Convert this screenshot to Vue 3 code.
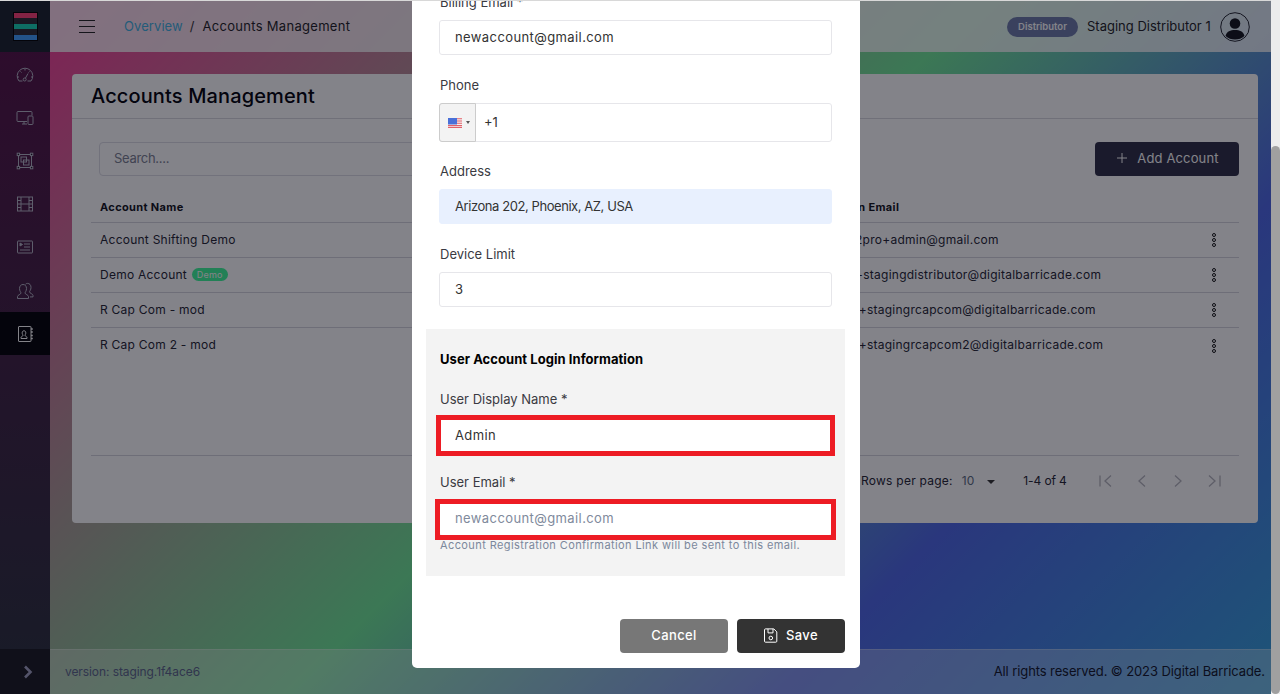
<script setup>
const navIcons = ['gauge', 'devices', 'group', 'film', 'list', 'people', 'book']

const accounts = [
  { name: 'Account Shifting Demo', email: 'demo2pro+admin@gmail.com' },
  { name: 'Demo Account', demo: true, email: 'demo+stagingdistributor@digitalbarricade.com' },
  { name: 'R Cap Com - mod', email: 'demo.+stagingrcapcom@digitalbarricade.com' },
  { name: 'R Cap Com 2 - mod', email: 'demo.+stagingrcapcom2@digitalbarricade.com' }
]
</script>

<template>
  <div class="shell">
    <div class="page">
      <aside class="sidebar">
        <div class="logo-cell">
          <div class="logo">
            <span class="bar red"></span>
            <span class="bar green"></span>
            <span class="bar blue"></span>
          </div>
        </div>
        <nav class="nav">
          <a v-for="icon in navIcons" :key="icon" class="nav-item" :class="{ active: icon === 'book' }">
            <svg width="18" height="18" viewBox="0 0 18 18" fill="none" stroke="currentColor" stroke-width="1">
              <template v-if="icon === 'gauge'">
                <path d="M3 15a7.800 7.800 0 1 1 12 0h-3.500" />
                <path d="M3 15h3.500" />
                <path d="M9 3v1.500M4.500 5.500l1 1M13.500 5.500l-1 1M1.500 11H3M15 11h1.500" />
                <path d="M9.500 12l2.500-4.500" />
                <circle cx="8.700" cy="13.500" r="1.500" />
              </template>
              <template v-else-if="icon === 'devices'">
                <path d="M11 12.500H2a1 1 0 0 1-1-1v-8a1 1 0 0 1 1-1h13a1 1 0 0 1 1 1v3" />
                <path d="M6 15h5M8 12.500V15" />
                <rect x="12" y="7" width="5" height="8.500" rx="1" />
              </template>
              <template v-else-if="icon === 'group'">
                <rect x="2.500" y="2.500" width="13" height="13" />
                <rect x="1.200" y="1.200" width="2.400" height="2.400" fill="#1c0c20" />
                <rect x="14.400" y="1.200" width="2.400" height="2.400" fill="#1c0c20" />
                <rect x="1.200" y="14.400" width="2.400" height="2.400" fill="#1c0c20" />
                <rect x="14.400" y="14.400" width="2.400" height="2.400" fill="#1c0c20" />
                <rect x="5" y="5" width="5.500" height="5" />
                <rect x="7.500" y="8" width="5.500" height="5" />
              </template>
              <template v-else-if="icon === 'film'">
                <rect x="1.500" y="2" width="15" height="14" />
                <path d="M5 2v14M13 2v14M5 9h8M1.500 5.500H5M1.500 9H5M1.500 12.500H5M13 5.500h3.500M13 9h3.500M13 12.500h3.500" />
              </template>
              <template v-else-if="icon === 'list'">
                <rect x="1.500" y="3" width="15" height="12" rx="0.500" />
                <path d="M8 6h6M8 9h6M4 12h10" />
                <path d="M4 5l2.500 1.500L4 8z" fill="currentColor" />
              </template>
              <template v-else-if="icon === 'people'">
                <path d="M1.500 16.500v-2c0-1.500 3.500-2.200 3.500-3.500 0-.8-1.500-1.800-1.500-4.500C3.500 4 5 2.500 7 2.500S10.500 4 10.500 6.500c0 2.700-1.500 3.700-1.500 4.500 0 1.300 3.500 2 3.500 3.500v2z" />
                <path d="M9.500 2.300c.5-.6 1.200-.9 2-.9 2 0 3.500 1.500 3.500 4 0 2.700-1.500 3.700-1.500 4.500 0 1.300 3.500 2 3.500 3.500v1.500h-3" />
              </template>
              <template v-else>
                <rect x="2.500" y="1.500" width="12.500" height="15" rx="0.500" />
                <path d="M15 4h1.800M15 7h1.800M15 10.500h1.800M15 13.500h1.800" stroke-width="1.400" />
                <path d="M5 13.500v-1c0-1 2-1.200 2-2.200 0-.5-.8-1-.8-2.500 0-1.300.7-2 1.800-2s1.800.7 1.800 2c0 1.500-.8 2-.8 2.500 0 1 2 1.200 2 2.200v1z" />
              </template>
            </svg>
          </a>
        </nav>
        <div class="expand">
          <svg width="12" height="14" viewBox="0 0 12 14" fill="none" stroke="currentColor" stroke-width="2.600">
            <path d="M3 1.500L8.500 7 3 12.500" />
          </svg>
        </div>
      </aside>

      <div class="main">
        <header class="topbar">
          <button class="burger">
            <span></span><span></span><span></span>
          </button>
          <div class="crumbs">
            <a class="crumb-link">Overview</a>
            <span class="crumb-sep">/</span>
            <span class="crumb-current">Accounts Management</span>
          </div>
          <div class="user">
            <span class="role">Distributor</span>
            <span class="user-name">Staging Distributor 1</span>
            <span class="avatar">
              <svg width="30" height="30" viewBox="0 0 30 30">
                <circle cx="15" cy="15" r="14.300" fill="none" stroke="#20222c" stroke-width="1" />
                <circle cx="15" cy="11.500" r="5.300" fill="#10121a" />
                <path d="M5.500 24c1-4.500 5-6 9.500-6s8.500 1.500 9.500 6c-2.500 2.500-6 3.500-9.500 3.500s-7-1-9.500-3.500z" fill="#10121a" />
              </svg>
            </span>
          </div>
        </header>

        <main class="content">
          <section class="card">
            <h1 class="card-title">Accounts Management</h1>
            <div class="card-body">
              <div class="toolbar">
                <input class="search" placeholder="Search...." />
                <button class="add-btn">
                  <svg width="10" height="10" viewBox="0 0 10 10" stroke="currentColor" stroke-width="1">
                    <path d="M5 0v10M0 5h10" />
                  </svg>
                  Add Account
                </button>
              </div>
              <table class="table">
                <thead>
                  <tr>
                    <th>Account Name</th>
                    <th class="email-col email-head">Login Email</th>
                    <th class="menu-col"></th>
                  </tr>
                </thead>
                <tbody>
                  <tr v-for="row in accounts" :key="row.name">
                    <td>
                      {{ row.name }}
                      <span v-if="row.demo" class="demo-pill">Demo</span>
                    </td>
                    <td class="email-col">{{ row.email }}</td>
                    <td class="menu-col">
                      <span class="dots"><i></i><i></i><i></i></span>
                    </td>
                  </tr>
                </tbody>
              </table>
              <div class="pager">
                <span>Rows per page:</span>
                <span class="per-page">10</span>
                <span class="caret"></span>
                <span class="range">1-4 of 4</span>
                <div class="pager-btns">
                  <svg width="16" height="16" viewBox="0 0 16 16" fill="none" stroke="currentColor" stroke-width="1.300">
                    <path d="M2 2.500v11M13 2.500L7 8l6 5.500" />
                  </svg>
                  <svg width="16" height="16" viewBox="0 0 16 16" fill="none" stroke="currentColor" stroke-width="1.300">
                    <path d="M11 2.500L5 8l6 5.500" />
                  </svg>
                  <svg width="16" height="16" viewBox="0 0 16 16" fill="none" stroke="currentColor" stroke-width="1.300">
                    <path d="M5 2.500L11 8l-6 5.500" />
                  </svg>
                  <svg width="16" height="16" viewBox="0 0 16 16" fill="none" stroke="currentColor" stroke-width="1.300">
                    <path d="M3 2.500L9 8l-6 5.500M14 2.500v11" />
                  </svg>
                </div>
              </div>
            </div>
          </section>
        </main>

        <footer class="footer">
          <span class="version">version: staging.1f4ace6</span>
          <span class="rights">All rights reserved. © 2023 Digital Barricade.</span>
        </footer>
      </div>

      <div class="backdrop"></div>

      <div class="modal">
        <div class="field">
          <label>Billing Email *</label>
          <input class="input" value="newaccount@gmail.com" />
        </div>
        <div class="field phone-field">
          <label>Phone</label>
          <div class="phone">
            <span class="flag-box">
              <svg width="14" height="10" viewBox="0 0 14 10">
                <rect width="14" height="10" fill="#f4f0f0" />
                <path d="M0 .7h14M0 3h14M0 5.300h14M0 7.600h14M0 9.500h14" stroke="#e2606a" stroke-width="1.100" />
                <rect width="9" height="6.500" fill="#4a70d8" />
              </svg>
              <span class="flag-caret"></span>
            </span>
            <span class="phone-value">+1</span>
          </div>
        </div>
        <div class="field">
          <label>Address</label>
          <input class="input filled" value="Arizona 202, Phoenix, AZ, USA" />
        </div>
        <div class="field device">
          <label>Device Limit</label>
          <input class="input" value="3" />
        </div>

        <div class="login-box">
          <h3>User Account Login Information</h3>
          <div class="field">
            <label>User Display Name *</label>
            <div class="marked">
              <input class="input" value="Admin" />
              <span class="mark mark-name"></span>
            </div>
          </div>
          <div class="field last">
            <label>User Email *</label>
            <div class="marked">
              <input class="input" placeholder="newaccount@gmail.com" />
              <span class="mark mark-email"></span>
            </div>
            <small>Account Registration Confirmation Link will be sent to this email.</small>
          </div>
        </div>

        <div class="modal-actions">
          <button class="btn cancel">Cancel</button>
          <button class="btn save">
            <svg width="14" height="15" viewBox="0 0 14 15" fill="none" stroke="currentColor" stroke-width="1">
              <path d="M1.500.9h8.300l3 3v9.300a1 1 0 0 1-1 1H1.500a1 1 0 0 1-1-1V1.900a1 1 0 0 1 1-1z" />
              <path d="M4 .9v4h5v-4" />
              <circle cx="6.800" cy="10" r="1.800" />
            </svg>
            Save
          </button>
        </div>
      </div>
    </div>
    <div class="scrollbar"><span class="thumb"></span></div>
  </div>
</template>

<style>
html, body {
  margin: 0;
  height: 100%;
  overflow: hidden;
}
</style>

<style scoped>
* {
  box-sizing: border-box;
}

.shell {
  display: flex;
  height: 100vh;
  font-family: Inter, "Liberation Sans", sans-serif;
  font-size: 13px;
  color: #333;
  background: #d8d8d8;
  padding-top: 1px;
}

.page {
  position: relative;
  flex: 1;
  display: flex;
  min-width: 0;
  overflow: hidden;
  background: linear-gradient(135deg, #ff3296 0%, #70e896 50%, #4c66e6 75%, #34a2dc 100%);
}

.scrollbar {
  width: 9px;
  margin-top: -1px;
  background: #ececec;
  display: flex;
  padding-top: 146px;
}

.thumb {
  flex: 1;
  background: #a0a0a0;
  border-radius: 5px;
}

.sidebar {
  width: 50px;
  flex: none;
  display: flex;
  flex-direction: column;
  background: linear-gradient(180deg, #560f46 0%, #28303c 100%);
  color: #b4b4c4;
}

.logo-cell {
  height: 51px;
  flex: none;
  background: #18202a;
  padding: 11px 0 0 13px;
}

.logo {
  width: 25px;
  height: 29px;
  background: #2a2a34;
  border: 1px solid #000;
  display: flex;
  flex-direction: column;
  justify-content: space-between;
}

.bar {
  height: 5px;
}

.bar.red { background: #ff3e74; }
.bar.green { background: #14d4b4; }
.bar.blue { background: #3e9eff; }

.nav {
  flex: 1;
  padding-top: 1px;
}

.nav-item {
  height: 43.2px;
  display: flex;
  align-items: center;
  justify-content: center;
}

.nav-item.active {
  background: #000004;
  color: #fff;
}

.expand {
  height: 45px;
  flex: none;
  background: #181820;
  color: #a0a0c0;
  display: flex;
  align-items: center;
  justify-content: center;
  padding-left: 6px;
}

.main {
  flex: 1;
  min-width: 0;
  display: flex;
  flex-direction: column;
}

.topbar {
  height: 51px;
  flex: none;
  display: flex;
  align-items: center;
  padding-left: 29px;
  padding-right: 21px;
  background: rgba(255, 255, 255, 0.8);
  color: #1c1c24;
}

.burger {
  width: 16px;
  height: 13px;
  padding: 0;
  border: 0;
  background: none;
  display: flex;
  flex-direction: column;
  justify-content: space-between;
  margin-right: 29px;
}

.burger span {
  height: 1px;
  background: #222;
}

.crumbs {
  display: flex;
  align-items: center;
  margin-bottom: 2px;
}

.crumb-link {
  color: #3fb0e0;
  letter-spacing: 0.08px;
}

.crumb-sep {
  margin: 0 8px 0 7px;
  color: #333;
}

.crumb-current {
  letter-spacing: 0.3px;
}

.user {
  margin-left: auto;
  display: flex;
  align-items: center;
}

.role {
  width: 71px;
  height: 20px;
  margin-right: 9px;
  border-radius: 10px;
  background: #6c7aa8;
  color: #fff;
  font-size: 9.500px;
  font-weight: 600;
  line-height: 20px;
  text-align: center;
}

.user-name {
  width: 133px;
  white-space: nowrap;
  margin-bottom: 2px;
}

.avatar {
  height: 30px;
}

.content {
  flex: 1;
  padding: 22px 13px 0 22px;
}

.card {
  height: 449px;
  background: #fff;
  border-radius: 4px;
  display: flex;
  flex-direction: column;
}

.card-title {
  margin: 0;
  height: 45px;
  flex: none;
  padding-left: 19px;
  border-bottom: 1px solid #d8d8de;
  font-size: 20px;
  font-weight: 500;
  line-height: 44px;
  letter-spacing: 0.13px;
  color: #000008;
}

.card-body {
  padding: 23px 19px 0;
}

.toolbar {
  display: flex;
  justify-content: space-between;
  padding-left: 8px;
}

.search {
  width: 420px;
  height: 34px;
  padding: 0 14px 2px;
  border: 1px solid #dcdce4;
  border-radius: 4px;
  font: inherit;
  letter-spacing: -0.3px;
  outline: none;
  background: #fff;
}

.search::placeholder {
  color: #7a8090;
}

.add-btn {
  width: 144px;
  height: 34px;
  padding: 0 0 2px 2px;
  border: 0;
  border-radius: 4px;
  background: #2c2c44;
  color: #fff;
  font: inherit;
  letter-spacing: 0.14px;
  display: flex;
  align-items: center;
  justify-content: center;
  gap: 10px;
}

.table {
  width: 100%;
  margin-top: 11px;
  border-collapse: collapse;
  font-size: 12px;
  letter-spacing: 0.25px;
}

.table tr {
  height: 35px;
}

.table th {
  height: 35px;
  padding: 6px 0 0 9px;
  text-align: left;
  font-size: 11px;
  font-weight: 700;
  letter-spacing: 0.35px;
  color: #101018;
  border-bottom: 1px solid #d4d4dc;
}

.table td {
  padding: 0 0 0 9px;
  color: #222230;
  border-bottom: 1px solid #d4d4dc;
}

.table tbody tr:last-child td {
  border-bottom: 0;
}

.table .email-col {
  width: 367px;
  padding-left: 0;
  white-space: nowrap;
}

.table .email-head {
  padding-left: 12px;
}

.table .menu-col {
  width: 50px;
  padding-left: 0;
  text-align: center;
}

.demo-pill {
  display: inline-block;
  height: 13px;
  padding: 0 5px;
  margin-left: 1px;
  border-radius: 7px;
  background: #3cf898;
  color: #fff;
  font-size: 9px;
  line-height: 13px;
  vertical-align: 1px;
}

.dots {
  display: inline-flex;
  flex-direction: column;
  gap: 1px;
  vertical-align: middle;
}

.dots i {
  width: 4px;
  height: 4px;
  border: 1px solid #111;
  border-radius: 50%;
}

.pager {
  height: 50px;
  margin-top: 93px;
  border-top: 1px solid #d4d4dc;
  display: flex;
  align-items: center;
  padding-left: 770px;
  font-size: 12px;
  color: #222230;
  letter-spacing: 0.25px;
}

.per-page {
  margin-left: 9px;
  letter-spacing: 0;
  color: #5a6a80;
}

.caret {
  width: 0;
  height: 0;
  margin-left: 13px;
  margin-top: 2px;
  border: 4px solid transparent;
  border-top: 4px solid #333;
  border-bottom: 0;
}

.range {
  margin-left: 28px;
  letter-spacing: -0.1px;
}

.pager-btns {
  display: flex;
  gap: 20px;
  margin-left: 31px;
  color: #b4b4bc;
}

.footer {
  height: 45px;
  flex: none;
  display: flex;
  align-items: center;
  justify-content: space-between;
  padding: 0 6px 0 15px;
  background: rgba(255, 255, 255, 0.3);
  border-top: 1px solid rgba(255, 255, 255, 0.25);
}

.version {
  font-size: 12px;
  letter-spacing: -0.08px;
  color: #5a6488;
  padding-bottom: 1px;
}

.rights {
  letter-spacing: -0.1px;
  color: #101428;
  padding-bottom: 2px;
}

.backdrop {
  position: absolute;
  inset: 0;
  background: rgba(8, 8, 20, 0.5);
}

.modal {
  position: absolute;
  left: 412px;
  top: 0;
  width: 448px;
  height: 667px;
  padding: 0 15px 15px 14px;
  display: flex;
  flex-direction: column;
  justify-content: flex-end;
  overflow: hidden;
  background: #fff;
  border-radius: 0 0 5px 5px;
}

.field {
  flex: none;
  padding: 0 13px;
  margin-bottom: 20px;
}

.field.phone-field {
  margin-bottom: 19px;
}

.field.device {
  margin-bottom: 22px;
}

.field label {
  display: block;
  height: 20px;
  line-height: 20px;
  margin-bottom: 8px;
  padding-left: 1px;
  color: #3a3a42;
}

.input {
  display: block;
  width: 100%;
  height: 35px;
  padding: 0 15px 2px;
  border: 1px solid #e6e6ea;
  border-radius: 3px;
  background: #fff;
  font: inherit;
  color: #333;
  letter-spacing: 0.4px;
  outline: none;
}

.input.filled {
  background: #e8f0fe;
  border-color: #e8f0fe;
  letter-spacing: -0.43px;
}

.input::placeholder {
  color: #808a9c;
}

.phone {
  height: 39px;
  padding-bottom: 2px;
  display: flex;
  align-items: center;
  border: 1px solid #e6e6ea;
  border-radius: 3px;
}

.flag-box {
  width: 37px;
  height: 39px;
  margin: 1px 0 -1px -1px;
  display: flex;
  align-items: center;
  gap: 4px;
  padding-left: 8px;
  background: #f3f3f3;
  border: 1px solid #ccc;
  border-radius: 3px 0 0 3px;
}

.flag-caret {
  border: 2.500px solid transparent;
  border-top: 3px solid #555;
  border-bottom: 0;
}

.phone-value {
  margin-left: 8px;
}

.login-box {
  flex: none;
  height: 247px;
  padding-top: 22px;
  background: #f3f3f3;
}

.login-box h3 {
  margin: 0 0 22px;
  padding-left: 14px;
  font-size: 13px;
  line-height: 16px;
  font-weight: 700;
  letter-spacing: 0.05px;
  color: #000;
}

.login-box .field {
  margin-bottom: 19px;
}

.login-box .field label {
  margin-bottom: 9px;
}

.login-box .field.last {
  margin-bottom: 0;
}

.marked {
  position: relative;
}

.mark {
  position: absolute;
  border: 5px solid #ed1c24;
}

.mark-name {
  inset: -3px;
}

.mark-email {
  inset: -2px -4px -4px -4px;
}

.field small {
  display: block;
  margin-top: 2px;
  padding-left: 1px;
  font-size: 11px;
  line-height: 14px;
  color: #7c889c;
  letter-spacing: 0.4px;
}

.modal-actions {
  flex: none;
  display: flex;
  justify-content: flex-end;
  gap: 9px;
  margin-top: 43px;
}

.btn {
  width: 108px;
  height: 34px;
  padding: 0 0 2px;
  border: 0;
  border-radius: 4px;
  color: #fff;
  font: inherit;
  font-weight: 500;
  letter-spacing: 0.4px;
  display: flex;
  align-items: center;
  justify-content: center;
  gap: 8px;
}

.btn.cancel {
  background: #777;
}

.btn.save {
  background: #333;
}
</style>
